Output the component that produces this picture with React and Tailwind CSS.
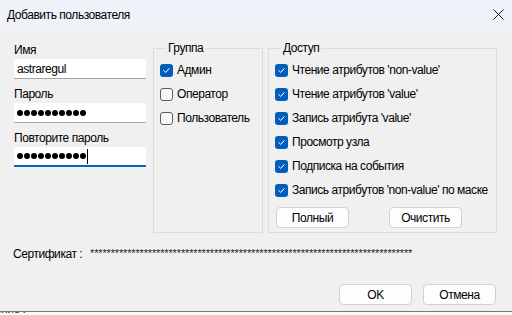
import clsx from 'clsx';

const font = { fontFamily: '"Liberation Sans", Arial, sans-serif' };

const CheckBox = ({ checked }) => (
  <span
    className={clsx(
      'flex h-[13px] w-[13px] shrink-0 items-center justify-center rounded-[3px]',
      checked ? 'bg-[#005fb8]' : 'border border-[#5d5d5d] bg-[#f7f7f7]'
    )}
  >
    {checked && (
      <svg width="9" height="9" viewBox="0 0 9 9" fill="none">
        <path d="M1.8 4.6 L3.7 6.4 L7.2 2.6" stroke="white" strokeWidth="1" strokeLinecap="round" strokeLinejoin="round" />
      </svg>
    )}
  </span>
);

const CheckRow = ({ label, checked }) => (
  <label className="flex h-[24px] items-center gap-[4px] whitespace-nowrap">
    <CheckBox checked={checked} />
    <span>{label}</span>
  </label>
);

const Button = ({ children, className }) => (
  <button
    className={clsx(
      'flex h-[21px] w-[73px] items-center justify-center rounded-[4px] border border-[#d0d0d0] bg-[#fdfdfd] text-[12px] tracking-[-0.45px] text-black',
      className
    )}
  >
    {children}
  </button>
);

const Dots = ({ n }) => (
  <span className="flex items-center gap-[1px]">
    {Array.from({ length: n }).map((_, i) => (
      <span key={i} className="h-[6px] w-[6px] rounded-full bg-black" />
    ))}
  </span>
);

const Field = ({ label, children, focused }) => (
  <div className="flex flex-col">
    <span className="h-[16px] leading-[16px]">{label}</span>
    <div
      className={clsx(
        'mt-[1px] flex h-[20px] items-center bg-white pl-[3px]',
        focused ? 'border-b-2 border-[#0067c0]' : 'border-b border-[#a5a5a5]'
      )}
    >
      {children}
    </div>
  </div>
);

const groups = ['Админ', 'Оператор', 'Пользователь'];
const access = [
  "Чтение атрибутов 'non-value'",
  "Чтение атрибутов 'value'",
  "Запись атрибута 'value'",
  'Просмотр узла',
  'Подписка на события',
  "Запись атрибутов 'non-value' по маске",
];

export default function App() {
  return (
    <div
      className="h-[315px] w-[512px] overflow-hidden bg-[#f0f0f0] text-[12px] leading-[16px] tracking-[-0.45px] text-black"
      style={font}
    >
      <div className="flex h-[29px] items-center justify-between bg-[#eff3f9] pl-[7px] pr-[8px]">
        <span>Добавить пользователя</span>
        <svg width="11" height="11" viewBox="0 0 11 11">
          <path d="M0.5 0.5 L10.5 10.5 M10.5 0.5 L0.5 10.5" stroke="#1a1a1a" strokeWidth="1" />
        </svg>
      </div>

      <div className="h-[282px] pt-[11px]">
        <div className="flex pl-[14px]">
          <div className="flex w-[132px] flex-col gap-[7px] pt-[2px]">
            <Field label="Имя">
              <span>astraregul</span>
            </Field>
            <Field label="Пароль">
              <Dots n={10} />
            </Field>
            <Field label="Повторите пароль" focused>
              <Dots n={10} />
              <span className="ml-[1px] h-[15px] w-[1px] bg-black" />
            </Field>
          </div>

          <fieldset className="ml-[7px] h-[193px] w-[110px] border border-[#dcdcdc] pl-[6px] pt-[2px]">
            <legend className="ml-[6px] px-[2px] leading-[16px]">Группа</legend>
            {groups.map((g, i) => (
              <CheckRow key={g} label={g} checked={i === 0} />
            ))}
          </fieldset>

          <fieldset className="ml-[5px] h-[193px] w-[229px] border border-[#dcdcdc] pl-[6px] pt-[2px]">
            <legend className="ml-[6px] px-[2px] leading-[16px]">Доступ</legend>
            {access.map((a) => (
              <CheckRow key={a} label={a} checked />
            ))}
            <div className="mt-[5px] flex gap-[40px] pl-[1px]">
              <Button>Полный</Button>
              <Button>Очистить</Button>
            </div>
          </fieldset>
        </div>

        <div className="mt-[13px] flex h-[16px] items-start pl-[13px]">
          <span className="w-[77px]">Сертификат :</span>
          <span className="mt-[2px] text-[11px] leading-[10px] tracking-[-0.15px] text-[#222]">
            {'*'.repeat(78)}
          </span>
        </div>

        <div className="mt-[22px] flex justify-end gap-[11px] pr-[16px]">
          <Button>OK</Button>
          <Button>Отмена</Button>
        </div>
      </div>

      <div className="h-[4px] overflow-hidden border-t border-[#7a7a7a] bg-[#fafafa]">
        <span className="-ml-[30px] -mt-[10px] block leading-[14px] text-[#333]">Значение :</span>
      </div>
    </div>
  );
}
